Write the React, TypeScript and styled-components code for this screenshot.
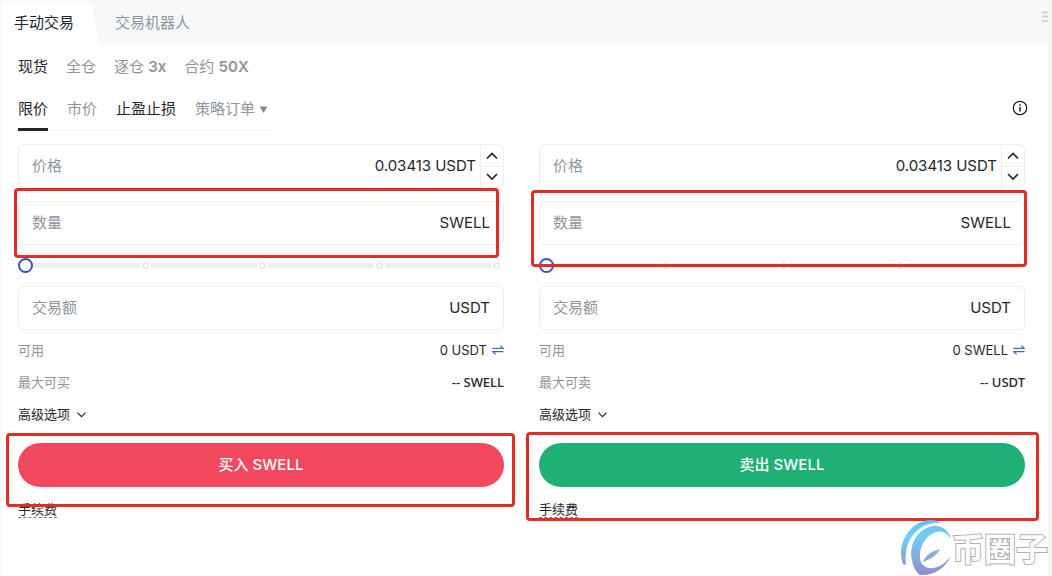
import React, { useState } from "react";
import styled, { createGlobalStyle } from "styled-components";

const ink = "#23262f";
const muted = "#8f959e";
const line = "#ebedf0";
const latin = `Inter, "Noto Sans CJK SC", sans-serif`;
const small = `"Noto Sans", "Noto Sans CJK SC", sans-serif`;

const GlobalStyle = createGlobalStyle`
  *, *::before, *::after { box-sizing: border-box; }
  body { margin: 0; background: #fff; color: ${ink}; font: 15px/20px ${latin}; }
  button, input { font: inherit; color: inherit; margin: 0; padding: 0; border: 0; background: none; }
  button { cursor: pointer; }
`;

const Page = styled.main`
  position: relative;
  min-height: 100vh;
  overflow: hidden;
  border-left: 1px solid #f5f6f7;
  border-right: 4px solid #f5f5f6;
`;

const Header = styled.nav`
  display: flex;
  align-items: stretch;
  height: 45px;
  background: #f7f8fa;
`;

const MainTab = styled.button<{ $active?: boolean }>`
  position: relative;
  padding: 0 25px 0 13px;
  color: ${(p) => (p.$active ? ink : muted)};
  & + & { padding-left: 16px; }
  svg { position: absolute; inset: 0; width: 100%; height: 100%; }
  span { position: relative; }
`;

const MenuButton = styled.button`
  margin-left: auto;
  width: 8px;
  height: 34px;
  svg { display: block; }
`;

const Modes = styled.nav`
  display: flex;
  gap: 18px;
  padding: 12px 17px 11px;
`;

const Mode = styled.button<{ $active?: boolean }>`
  color: ${(p) => (p.$active ? ink : muted)};
  white-space: nowrap;
  b { font-weight: 600; }
`;

const OrderBar = styled.div`
  display: flex;
  justify-content: space-between;
  align-items: flex-start;
  padding: 0 20px 13px 17px;
`;

const OrderTabs = styled.nav`
  display: flex;
  gap: 19px;
  height: 43px;
  padding-right: 7px;
  border-bottom: 1px solid #f3f4f6;
`;

const OrderTab = styled.button<{ $tone?: "current" | "dark" }>`
  display: flex;
  align-items: center;
  gap: 4px;
  height: 43px;
  padding-bottom: 1px;
  border-bottom: 3px solid ${(p) => (p.$tone === "current" ? ink : "transparent")};
  border-top: 3px solid transparent;
  color: ${(p) => (p.$tone ? ink : muted)};
  white-space: nowrap;
`;

const InfoButton = styled.button`
  display: flex;
  padding: 12px 0 0;
`;

const Columns = styled.div`
  display: grid;
  grid-template-columns: 1fr 1fr;
  gap: 35px;
  padding: 0 23px 0 17px;
`;

const Form = styled.form`
  display: flex;
  flex-direction: column;
  min-width: 0;
`;

const Marked = styled.div`
  position: relative;
`;

const QuantityRow = styled(Marked)`
  margin-top: 13px;
`;

const Mark = styled.div<{ $inset: string }>`
  position: absolute;
  z-index: 2;
  inset: ${(p) => p.$inset};
  border: 3px solid #e02d26;
  border-radius: 4px;
  pointer-events: none;
`;

const Field = styled.label`
  display: flex;
  align-items: center;
  height: 44px;
  padding-left: 13px;
  border: 1px solid ${line};
  border-radius: 6px;
  color: ${muted};
  input {
    flex: 1;
    min-width: 0;
    padding-right: 4px;
    text-align: right;
    color: ${ink};
    outline: none;
  }
`;

const Unit = styled.span<{ $stepped?: boolean }>`
  padding-right: ${(p) => (p.$stepped ? 4 : 13)}px;
  color: ${ink};
`;

const Stepper = styled.span`
  display: grid;
  grid-template-rows: 1fr 1fr;
  width: 23px;
  height: 42px;
  border-left: 1px solid ${line};
  button { display: grid; place-items: center; }
  button + button { border-top: 1px solid ${line}; }
`;

const SliderBox = styled.div`
  position: relative;
  height: 41px;
  padding-top: 12px;
`;

const Ticks = styled.div`
  position: absolute;
  top: 17px;
  left: 14px;
  right: 4px;
  display: grid;
  grid-template-columns: repeat(4, 1fr);
  i {
    display: flex;
    align-items: center;
    justify-content: flex-end;
    gap: 2px;
  }
  i::before { content: ""; flex: 1; height: 5px; background: #ebedf0; }
  i::after { content: ""; width: 7px; height: 7px; border: 2px solid #e8eaed; border-radius: 50%; }
  i + i { padding-left: 2px; }
`;

const Range = styled.input`
  position: relative;
  display: block;
  appearance: none;
  width: 100%;
  height: 16px;
  background: transparent;
  &::-webkit-slider-thumb {
    appearance: none;
    width: 15px;
    height: 15px;
    border: 2px solid #3850c0;
    border-radius: 50%;
    background: #fff;
  }
`;

const Details = styled.dl`
  display: grid;
  gap: 12px;
  margin: 10px 0 12px;
  font: 13px/20px ${small};
  div { display: flex; justify-content: space-between; }
  dt { color: ${muted}; }
  dd { display: flex; align-items: center; gap: 5px; margin: 0; }
  button { display: flex; }
`;

const Available = styled.dd`
  font-family: ${latin};
`;

const Limit = styled.dd`
  font-weight: 500;
`;

const Advanced = styled.button`
  display: flex;
  align-items: center;
  align-self: flex-start;
  gap: 7px;
  margin-bottom: 19px;
  font: 13px/20px ${small};
  svg { margin-top: 2px; }
`;

const Submit = styled.button<{ $side: Side }>`
  display: block;
  width: 100%;
  height: 44px;
  border-radius: 22px;
  background: ${(p) => (p.$side === "buy" ? "#f2495e" : "#1eb173")};
  color: #fff;
  font-weight: 500;
`;

const Fee = styled.a`
  align-self: flex-start;
  margin-top: 15px;
  border-bottom: 1px dashed #777b84;
  color: ${ink};
  font: 13px/15px ${small};
  text-decoration: none;
`;

const Watermark = styled.div`
  position: absolute;
  z-index: 3;
  top: 518px;
  right: 0;
  display: flex;
  align-items: center;
  pointer-events: none;
  svg { display: block; }
  span {
    color: #fff;
    font: 700 32px/40px "Noto Sans CJK SC", sans-serif;
    -webkit-text-stroke: 2px #b0b0b4;
    paint-order: stroke fill;
  }
`;

type Side = "buy" | "sell";

const Chevron = ({ up }: { up?: boolean }) => (
  <svg width="12" height="8" viewBox="0 0 12 8" fill="none" stroke={ink} strokeWidth="1.7">
    <path d={up ? "M1 6.5 6 1.5l5 5" : "M1 1l5 5 5-5"} />
  </svg>
);

const SwapIcon = () => (
  <svg width="12" height="10" viewBox="0 0 12 10" fill="none" stroke="#4a66c8" strokeWidth="1.2">
    <path d="M.5 3.4h10.7L8.4.6M11.5 6.6H.8l2.8 2.8" />
  </svg>
);

interface TradeProps {
  side: Side;
  available: string;
  limitLabel: string;
  limit: string;
  quantityMark: string;
  submitMark: string;
}

function TradeForm({ side, available, limitLabel, limit, quantityMark, submitMark }: TradeProps) {
  const [price, setPrice] = useState("0.03413");
  const [percent, setPercent] = useState(0);
  const step = (by: number) => setPrice((Number(price) + by).toFixed(5));
  return (
    <Form onSubmit={(e) => e.preventDefault()}>
      <Field>
        价格
        <input value={price} onChange={(e) => setPrice(e.target.value)} />
        <Unit $stepped>USDT</Unit>
        <Stepper>
          <button type="button" aria-label="+" onClick={() => step(0.00001)}><Chevron up /></button>
          <button type="button" aria-label="-" onClick={() => step(-0.00001)}><Chevron /></button>
        </Stepper>
      </Field>
      <QuantityRow>
        <Field>
          数量
          <input />
          <Unit>SWELL</Unit>
        </Field>
        <Mark $inset={quantityMark} />
      </QuantityRow>
      <SliderBox>
        <Ticks><i /><i /><i /><i /></Ticks>
        <Range type="range" aria-label="%" min={0} max={100} value={percent}
          onChange={(e) => setPercent(Number(e.target.value))} />
      </SliderBox>
      <Field>
        交易额
        <input />
        <Unit>USDT</Unit>
      </Field>
      <Details>
        <div>
          <dt>可用</dt>
          <Available>{available}<button type="button" aria-label="⇌"><SwapIcon /></button></Available>
        </div>
        <div>
          <dt>{limitLabel}</dt>
          <Limit>{limit}</Limit>
        </div>
      </Details>
      <Advanced type="button">
        高级选项
        <svg width="9" height="6" viewBox="0 0 9 6" fill="none" stroke={ink} strokeWidth="1.2">
          <path d="M.5.7l4 4 4-4" />
        </svg>
      </Advanced>
      <Marked>
        <Submit $side={side}>{side === "buy" ? "买入" : "卖出"} SWELL</Submit>
        <Mark $inset={submitMark} />
      </Marked>
      <Fee href="#fee">手续费</Fee>
    </Form>
  );
}

export default function App() {
  return (
    <>
      <GlobalStyle />
      <Page>
        <Header>
          <MainTab $active>
            <svg viewBox="0 0 98 45" preserveAspectRatio="none">
              <path d="M0 45V8Q0 1 7 1H85Q90 1 91 7L98 45Z" fill="#fff" />
            </svg>
            <span>手动交易</span>
          </MainTab>
          <MainTab>交易机器人</MainTab>
          <MenuButton aria-label="☰">
            <svg width="8" height="34" viewBox="0 0 8 34" stroke="#cfd1d4" strokeWidth="2">
              <path d="M2 12.5h6M2 16.5h6M2 21h6" />
            </svg>
          </MenuButton>
        </Header>
        <Modes>
          <Mode $active>现货</Mode>
          <Mode>全仓</Mode>
          <Mode>逐仓 <b>3x</b></Mode>
          <Mode>合约 <b>50X</b></Mode>
        </Modes>
        <OrderBar>
          <OrderTabs>
            <OrderTab $tone="current">限价</OrderTab>
            <OrderTab>市价</OrderTab>
            <OrderTab $tone="dark">止盈止损</OrderTab>
            <OrderTab>
              策略订单
              <svg width="9" height="7" viewBox="0 0 9 7" fill="#858b94"><path d="M.5.5h8L4.5 7z" /></svg>
            </OrderTab>
          </OrderTabs>
          <InfoButton aria-label="i">
            <svg width="16" height="16" viewBox="0 0 16 16" fill="none" stroke={ink} strokeWidth="1.3">
              <circle cx="8" cy="8" r="6.7" />
              <path d="M8 7v4.5M8 4.2v1.5" strokeWidth="1.6" />
            </svg>
          </InfoButton>
        </OrderBar>
        <Columns>
          <TradeForm side="buy" available="0 USDT" limitLabel="最大可买" limit="-- SWELL"
            quantityMark="-13px 5px -13px -4px" submitMark="-10px -11px -20px -12px" />
          <TradeForm side="sell" available="0 SWELL" limitLabel="最大可卖" limit="-- USDT"
            quantityMark="-11px -2px -22px -8px" submitMark="-11px -14px -34px -13px" />
        </Columns>
        <Watermark>
          <svg width="54" height="58" viewBox="0 0 54 58" fill="none">
            <defs>
              <linearGradient id="wave" gradientUnits="userSpaceOnUse" x1="0" y1="2" x2="0" y2="58">
                <stop offset="0" stopColor="#62bdec" />
                <stop offset=".3" stopColor="#74cdf3" />
                <stop offset="1" stopColor="#8f8cca" />
              </linearGradient>
            </defs>
            <g fill="url(#wave)">
              <path d="M44 5C36 0 25 1 16 8 5 17 0 32 5 46l3 1C6 33 10 20 20 12c7-6 15-8 24-7Z" />
              <path d="M53 21C50 10 40 5 29 10 17 15 11 29 14 42c1 7 4 12 8 15 13 1 25-6 31-19-6 8-14 13-22 12-7-1-10-7-9-15 1-9 7-18 16-21 6-2 11 1 15 7Z" />
              <path d="M25 44c2-6 8-11 17-13-3 6-9 10-17 13Z" />
            </g>
          </svg>
          <span>币圈子</span>
        </Watermark>
      </Page>
    </>
  );
}
